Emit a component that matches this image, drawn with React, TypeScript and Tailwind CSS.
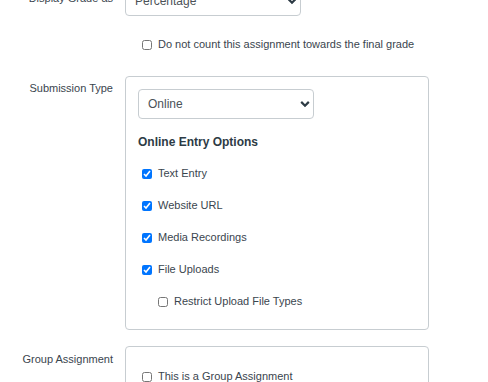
import React from 'react';

const labelCls = "w-[113px] shrink-0 text-right leading-[14px]";

function Chevron() {
  return (
    <svg
      className="pointer-events-none absolute right-[4px] top-1/2 -translate-y-1/2 w-[10px] h-[7px]"
      viewBox="0 0 10 7"
      fill="none"
    >
      <path d="M1.2 1.4 L5 5.2 L8.8 1.4" stroke="#2d3b45" strokeWidth="2.2" />
    </svg>
  );
}

function Select({ value, options }: { value: string; options: string[] }) {
  return (
    <div className="relative w-[176px] h-[30px]">
      <select
        defaultValue={value}
        className="appearance-none w-full h-full bg-white border border-[#c7cdd1] rounded-[4px] pl-[9px] pr-6 text-[12px] text-[#4b5257] outline-none"
      >
        {options.map(o => (
          <option key={o}>{o}</option>
        ))}
      </select>
      <Chevron />
    </div>
  );
}

function Check({ label, checked = false, className = '' }: { label: string; checked?: boolean; className?: string }) {
  return (
    <label className={"flex items-center gap-[6px] leading-[14px] " + className}>
      <input type="checkbox" defaultChecked={checked} className="m-0 w-[10px] h-[10px] mt-[1px] shrink-0" />
      <span>{label}</span>
    </label>
  );
}

export default function App() {
  return (
    <div className="w-[488px] h-[382px] overflow-hidden bg-white text-[11px] text-[#3a454e] font-['Liberation_Sans',Arial,sans-serif]">
      {/* Display Grade as */}
      <div className="flex gap-[12px] mt-[-14px]">
        <div className={labelCls + " pt-[5px]"}>Display Grade as</div>
        <Select value="Percentage" options={['Percentage', 'Points', 'Letter Grade']} />
      </div>

      <div className="pl-[142px] mt-[21px]">
        <Check label="Do not count this assignment towards the final grade" />
      </div>

      {/* Submission Type */}
      <div className="flex gap-[12px] mt-[25px]">
        <div className={labelCls + " pt-[5px]"}>Submission Type</div>
        <div className="w-[304px] border border-[#c7cdd1] rounded-[4px] pt-[12px] pb-[21px] pl-[12px]">
          <Select value="Online" options={['Online', 'On Paper', 'No Submission']} />
          <h4 className="mt-[15px] text-[12px] leading-[16px] font-bold text-[#2d3b45]">Online Entry Options</h4>
          <div className="pl-[4px] mt-[16px] flex flex-col gap-[18px]">
            <Check label="Text Entry" checked />
            <Check label="Website URL" checked />
            <Check label="Media Recordings" checked />
            <Check label="File Uploads" checked />
            <Check label="Restrict Upload File Types" className="pl-[16px]" />
          </div>
        </div>
      </div>

      {/* Group Assignment */}
      <div className="flex gap-[12px] mt-[16px]">
        <div className={labelCls + " pt-[6px]"}>Group Assignment</div>
        <div className="w-[304px] border border-[#c7cdd1] rounded-[4px] pt-[22px] pl-[16px] pb-[20px]">
          <Check label="This is a Group Assignment" />
        </div>
      </div>
    </div>
  );
}
